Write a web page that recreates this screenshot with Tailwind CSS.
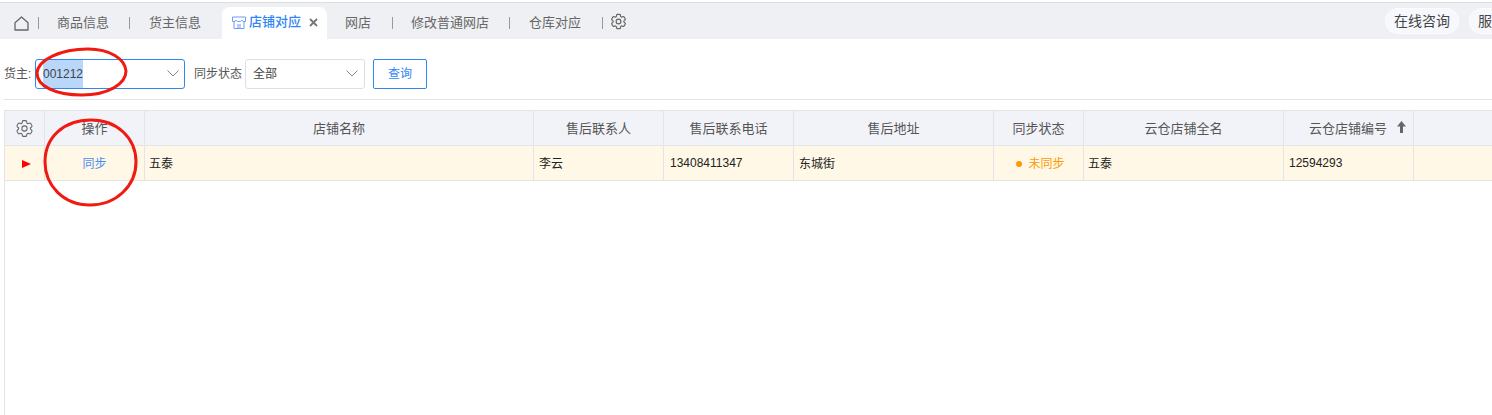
<!DOCTYPE html>
<html lang="zh-CN">
<head>
    <meta charset="UTF-8">
    <title>店铺对应</title>
    <script src="https://cdn.jsdelivr.net/npm/@tailwindcss/browser@4"></script>
</head>
<body class="relative h-[415px] w-[1492px] overflow-hidden bg-white font-['Liberation_Sans','Noto_Sans_CJK_SC',sans-serif] text-[12px] text-[#333]">
    <!-- Tab bar -->
    <nav class="mt-[2px] flex h-[37px] items-end overflow-hidden border-t border-[#dcdde1] bg-[#eff0f4] text-[13px] text-[#666]">
        <div class="flex h-[32px] w-[222px] shrink-0 items-center">
            <svg class="ml-[14px] h-[15px] w-[15px]" viewBox="0 0 15 15" fill="none" stroke="#666" stroke-width="1.3"><path d="M1 6.800 7.500 1 14 6.800V14H1z" stroke-linejoin="round"></path></svg>
            <span class="ml-[9px] h-[12px] w-px bg-[#999]"></span>
            <span class="ml-[18px]">商品信息</span>
            <span class="ml-[20px] h-[12px] w-px bg-[#999]"></span>
            <span class="ml-[19px]">货主信息</span>
        </div>
        <div class="flex h-[32px] w-[105px] shrink-0 items-center rounded-t-[8px] bg-white pb-[2px] pl-[10px] font-medium text-[#2f86f6]">
            <svg class="mr-[3px] h-[13px] w-[14px]" viewBox="0 0 14 13" fill="none" stroke="#6f9cf5" stroke-width="1"><path d="M.5 1h13v4.500h-2.500l-1-1.500-1.500 1.500h-3L4 4 3 5.500H.5zM2 6v6.500h10V6M5 9h4M5 11h4"></path></svg>
            <span>店铺对应</span>
            <svg class="ml-[8px] h-[9px] w-[9px]" viewBox="0 0 9 9" stroke="#777" stroke-width="1.8"><path d="M1 1l7 7M8 1 1 8"></path></svg>
        </div>
        <div class="flex h-[32px] items-center">
            <span class="ml-[18px]">网店</span>
            <span class="ml-[21px] h-[12px] w-px bg-[#999]"></span>
            <span class="ml-[18px]">修改普通网店</span>
            <span class="ml-[20px] h-[12px] w-px bg-[#999]"></span>
            <span class="ml-[19px]">仓库对应</span>
            <span class="ml-[21px] h-[12px] w-px bg-[#999]"></span>
            <svg class="ml-[6px] -mt-[3px] h-[19px] w-[19px]" viewBox="0 0 24 24" fill="none" stroke="#666" stroke-width="1.500"><path d="M9.594 3.940c.09-.542.56-.94 1.110-.94h2.593c.55 0 1.020.398 1.110.94l.213 1.281c.063.374.313.686.645.870.074.040.147.083.22.127.325.196.72.257 1.075.124l1.217-.456a1.125 1.125 0 0 1 1.370.490l1.296 2.247a1.125 1.125 0 0 1-.26 1.431l-1.003.827c-.293.241-.438.613-.43.992a7.723 7.723 0 0 1 0 .255c-.008.378.137.75.43.991l1.004.827c.424.35.534.955.26 1.430l-1.298 2.247a1.125 1.125 0 0 1-1.369.491l-1.217-.456c-.355-.133-.75-.072-1.076.124a6.470 6.470 0 0 1-.22.128c-.331.183-.581.495-.644.869l-.213 1.281c-.09.543-.56.94-1.110.94h-2.594c-.55 0-1.019-.398-1.110-.94l-.213-1.281c-.062-.374-.312-.686-.644-.87a6.520 6.520 0 0 1-.22-.127c-.325-.196-.72-.257-1.076-.124l-1.217.456a1.125 1.125 0 0 1-1.369-.49l-1.297-2.247a1.125 1.125 0 0 1 .26-1.431l1.004-.827c.292-.24.437-.613.43-.991a6.932 6.932 0 0 1 0-.255c.007-.38-.138-.751-.43-.992l-1.004-.827a1.125 1.125 0 0 1-.26-1.430l1.297-2.247a1.125 1.125 0 0 1 1.370-.491l1.216.456c.356.133.751.072 1.076-.124.072-.044.146-.086.22-.128.332-.183.582-.495.644-.869l.214-1.280Z"></path><circle cx="12" cy="12" r="3"></circle></svg>
        </div>
        <div class="mb-[5px] ml-auto flex h-[26px] items-center text-[14px]">
            <span class="flex h-[26px] w-[74px] items-center justify-center rounded-full border border-white/60 bg-[#f6f8fd] text-[#444]">在线咨询</span>
            <span class="ml-[10px] flex h-[26px] w-[23px] items-center whitespace-nowrap rounded-l-full border-y border-l border-white/60 bg-[#f6f8fd] pl-[8px] text-[#444]">服</span>
        </div>
    </nav>

    <!-- Filters -->
    <section class="ml-[4px] flex h-[61px] items-center border-b border-[#e3e4e8] pt-[9px]">
        <label class="w-[31px] text-[#555]">货主:</label>
        <div class="flex h-[30px] w-[150px] items-center rounded-[3px] border border-[#2f86f6] pl-[7px] pr-[5px]">
            <span class="bg-[#b9d7fb] leading-[28px] text-[#444]">001212</span>
            <svg class="ml-auto h-[7px] w-[12px]" viewBox="0 0 12 7" fill="none" stroke="#888"><path d="M.5.500l5.500 5.500L11.500.500"></path></svg>
        </div>
        <label class="ml-[9px] w-[51px] whitespace-nowrap text-[#555]">同步状态</label>
        <div class="flex h-[30px] w-[120px] items-center rounded-[3px] border border-[#dcdfe6] pl-[7px] pr-[6px] text-[#444]">
            <span>全部</span>
            <svg class="ml-auto h-[7px] w-[12px]" viewBox="0 0 12 7" fill="none" stroke="#888"><path d="M.5.500l5.500 5.500L11.500.500"></path></svg>
        </div>
        <button class="ml-[8px] h-[30px] w-[54px] rounded-[2px] border border-[#2f86f6] text-[#2f86f6]">查询</button>
    </section>

    <!-- Table -->
    <section class="ml-[4px] mt-[10px] h-[306px] border-l border-[#e3e4e8]">
        <div class="flex h-[36px] border-y border-[#e3e4e8] bg-[#f2f3f9] text-[13px] text-[#555]">
            <div class="flex w-[40px] items-center justify-center border-r border-[#e3e4e8]">
                <svg class="h-[21px] w-[21px]" viewBox="0 0 24 24" fill="none" stroke="#666" stroke-width="1.200"><path d="M9.594 3.940c.09-.542.56-.94 1.110-.94h2.593c.55 0 1.020.398 1.110.94l.213 1.281c.063.374.313.686.645.870.074.040.147.083.22.127.325.196.72.257 1.075.124l1.217-.456a1.125 1.125 0 0 1 1.370.490l1.296 2.247a1.125 1.125 0 0 1-.26 1.431l-1.003.827c-.293.241-.438.613-.43.992a7.723 7.723 0 0 1 0 .255c-.008.378.137.75.43.991l1.004.827c.424.35.534.955.26 1.430l-1.298 2.247a1.125 1.125 0 0 1-1.369.491l-1.217-.456c-.355-.133-.75-.072-1.076.124a6.470 6.470 0 0 1-.22.128c-.331.183-.581.495-.644.869l-.213 1.281c-.09.543-.56.94-1.110.94h-2.594c-.55 0-1.019-.398-1.110-.94l-.213-1.281c-.062-.374-.312-.686-.644-.87a6.520 6.520 0 0 1-.22-.127c-.325-.196-.72-.257-1.076-.124l-1.217.456a1.125 1.125 0 0 1-1.369-.49l-1.297-2.247a1.125 1.125 0 0 1 .26-1.431l1.004-.827c.292-.24.437-.613.43-.991a6.932 6.932 0 0 1 0-.255c.007-.38-.138-.751-.43-.992l-1.004-.827a1.125 1.125 0 0 1-.26-1.430l1.297-2.247a1.125 1.125 0 0 1 1.370-.491l1.216.456c.356.133.751.072 1.076-.124.072-.044.146-.086.22-.128.332-.183.582-.495.644-.869l.214-1.280Z"></path><circle cx="12" cy="12" r="3"></circle></svg>
            </div>
            <div class="flex w-[100px] items-center justify-center border-r border-[#e3e4e8] pt-[1px]">操作</div>
            <div class="flex w-[389px] items-center justify-center border-r border-[#e3e4e8] pt-[1px]">店铺名称</div>
            <div class="flex w-[130px] items-center justify-center border-r border-[#e3e4e8] pt-[1px]">售后联系人</div>
            <div class="flex w-[130px] items-center justify-center border-r border-[#e3e4e8] pt-[1px]">售后联系电话</div>
            <div class="flex w-[200px] items-center justify-center border-r border-[#e3e4e8] pt-[1px]">售后地址</div>
            <div class="flex w-[90px] items-center justify-center border-r border-[#e3e4e8] pt-[1px]">同步状态</div>
            <div class="flex w-[200px] items-center justify-center border-r border-[#e3e4e8] pt-[1px]">云仓店铺全名</div>
            <div class="flex w-[130px] items-center justify-center border-r border-[#e3e4e8] pl-[18px] pt-[1px]">
                <span>云仓店铺编号</span>
                <svg class="mb-[3px] ml-[10px] h-[12px] w-[9px]" viewBox="0 0 9 12" fill="#666"><path d="M4.500 0 9 5.500H6V12H3V5.500H0z"></path></svg>
            </div>
        </div>
        <div class="flex h-[35px] border-b border-[#e3e4e8] bg-[#fff8e6] text-[#222]">
            <div class="flex w-[40px] items-center justify-center border-r border-[#e3e4e8] pl-[3px] pt-[1px]">
                <svg class="h-[8px] w-[9px]" viewBox="0 0 9 8" fill="#f00"><path d="M0 0l9 4-9 4z"></path></svg>
            </div>
            <div class="flex w-[100px] items-center justify-center border-r border-[#e3e4e8] pt-[1px] text-[#4c8cf5]">同步</div>
            <div class="flex w-[389px] items-center border-r border-[#e3e4e8] pl-[4px] pt-[1px]">五泰</div>
            <div class="flex w-[130px] items-center border-r border-[#e3e4e8] pl-[5px] pt-[1px]">李云</div>
            <div class="flex w-[130px] items-center border-r border-[#e3e4e8] pl-[6px]">13408411347</div>
            <div class="flex w-[200px] items-center border-r border-[#e3e4e8] pl-[5px] pt-[1px]">东城街</div>
            <div class="flex w-[90px] items-center justify-center border-r border-[#e3e4e8] pl-[4px] pt-[1px] text-[#f90]">
                <span class="mr-[6px] h-[6px] w-[6px] rounded-full bg-[#f90]"></span>未同步
            </div>
            <div class="flex w-[200px] items-center border-r border-[#e3e4e8] pl-[4px] pt-[1px]">五泰</div>
            <div class="flex w-[130px] items-center border-r border-[#e3e4e8] pl-[5px]">12594293</div>
        </div>
    </section>

    <!-- Hand-drawn red annotations on top of the screenshot -->
    <svg class="pointer-events-none absolute left-0 top-0 h-[415px] w-[1492px]" viewBox="0 0 1492 415" fill="none" stroke="#f01a10" stroke-width="3">
        <path d="M37 73C38 60 60 49 88 49c22 0 37 10 38 22 0 13-18 24-44 24-27 0-45-9-45-22z"></path>
        <path d="M91 120c26 0 45 18 45 42 0 24-20 43-46 43-27 0-45-20-45-43 0-25 19-42 46-42z"></path>
    </svg>
</body>
</html>
